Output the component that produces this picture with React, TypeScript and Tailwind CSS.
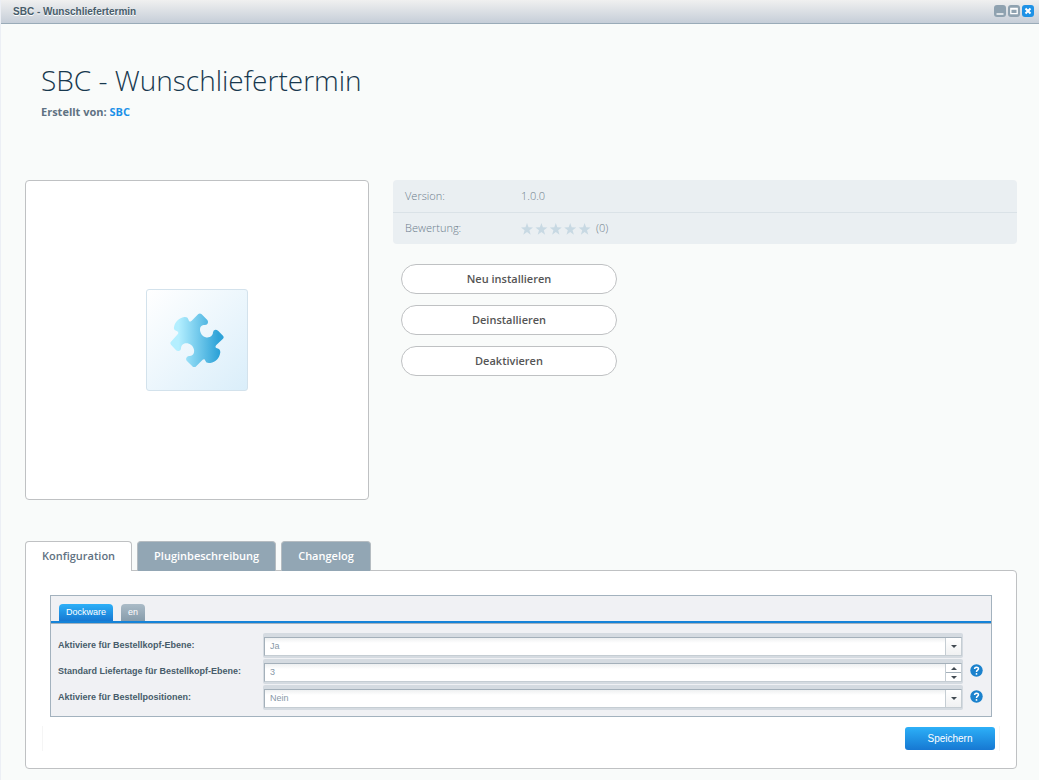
import type { ReactNode } from "react";

const actions = ["Neu installieren", "Deinstallieren", "Deaktivieren"];
const tabs = ["Pluginbeschreibung", "Changelog"];

function PuzzleIcon() {
	return (
		<svg className="h-[54px] w-[54px]" viewBox="0 0 162 162" aria-hidden="true">
			<defs>
				<linearGradient id="puzzle" x1="0" x2="1">
					<stop offset="0.15" stopColor="#b4efff" />
					<stop offset="0.9" stopColor="#2fa3d8" />
				</linearGradient>
			</defs>
			<path
				fill="url(#puzzle)"
				d="M3 86 L23 64 Q28 57 20 54 Q10 52 12 43 C14 27 27 15 43 12 Q54 11 56 22 Q58 29 65 23 L85 3 Q90 -1 95 4 L112 21 Q116 27 112 33 Q109 37 101 36 C91 37 88 47 91 56 C95 70 108 76 119 72 Q129 68 129 58 Q130 51 136 50 Q141 50 145 54 L159 68 Q163 73 159 77 L139 96 Q133 103 141 106 Q151 108 151 118 C149 135 137 148 121 150 Q108 152 106 143 Q104 136 98 140 L77 161 Q72 165 67 160 L50 143 Q46 138 51 132 Q54 128 60 129 C69 129 74 120 72 110 C69 96 57 89 45 91 Q35 94 33 104 Q34 112 27 114 Q21 115 17 110 L3 95 Q-1 90 3 86 Z"
			/>
		</svg>
	);
}

function Stars() {
	return (
		<svg className="h-3 w-[70px]" viewBox="0 0 70 12" fill="#c8d9e3" aria-hidden="true">
			{[0, 14.4, 28.8, 43.2, 57.6].map((x) => (
				<path key={x} transform={`translate(${x} 0)`} d="M6 0 L7.5 4.3 L12 4.4 L8.4 7.2 L9.7 11.7 L6 9.1 L2.3 11.7 L3.6 7.2 L0 4.4 L4.5 4.3Z" />
			))}
		</svg>
	);
}

function WindowButton({ label, className, children }: { label: string; className: string; children: ReactNode }) {
	return (
		<button type="button" aria-label={label} className={`h-3 w-3 rounded-[3px] ${className}`}>
			<svg className="block h-3 w-3" viewBox="0 0 12 12" fill="none" stroke="#fff" aria-hidden="true">
				{children}
			</svg>
		</button>
	);
}

function Help() {
	return (
		<button type="button" aria-label="Hilfe" className="ml-[7px] h-[13px] w-[13px]">
			<svg className="block h-[13px] w-[13px]" viewBox="0 0 13 13" aria-hidden="true">
				<circle cx="6.5" cy="6.5" r="6.2" fill="#1b82cd" />
				<path d="M4.6 5 C4.6 2.6 8.5 2.6 8.5 4.8 C8.5 6.2 6.5 6.1 6.5 7.9" fill="none" stroke="#fff" strokeWidth="1.5" />
				<circle cx="6.5" cy="9.9" r="0.9" fill="#fff" />
			</svg>
		</button>
	);
}

function Arrow({ up = false }: { up?: boolean }) {
	return (
		<svg className="h-[3px] w-[6px]" viewBox="0 0 6 3" fill="#414a52" aria-hidden="true">
			<path d={up ? "M0 3 L3 0 L6 3Z" : "M0 0 L6 0 L3 3Z"} />
		</svg>
	);
}

type RowProps = {
	id: string;
	label: string;
	help?: boolean;
	children: ReactNode;
};

function Row({ id, label, help, children }: RowProps) {
	return (
		<div className="flex h-[25px] items-center">
			<label htmlFor={id} className="w-[205px] shrink-0 text-[9px] font-bold text-[#475c6a]">
				{label}
			</label>
			<div className="flex h-[25px] flex-1 rounded-[2px] bg-[#d5dbe1] pt-1 pr-px pb-[2px] pl-px">{children}</div>
			<div className="w-[21px] shrink-0">{help && <Help />}</div>
		</div>
	);
}

function SelectField({ id, value }: { id: string; value: string }) {
	return (
		<div className="relative flex flex-1 border border-[#a4b0ba] border-r-[#c5cdd3] border-b-[#c5cdd3]">
			<select id={id} defaultValue={value} className="w-full appearance-none bg-white bg-linear-to-b from-[#eef0f1] to-white to-30% pl-[5px] text-[9px] text-[#8798a7]">
				<option>Ja</option>
				<option>Nein</option>
			</select>
			<span className="pointer-events-none absolute inset-y-0 right-0 flex w-4 items-center justify-center border-l border-[#c5cdd3] bg-linear-to-b from-white to-[#f0f1f2]">
				<Arrow />
			</span>
		</div>
	);
}

export default function App() {
	return (
		<div className="min-h-screen border-l border-[#eceff5] bg-[#f9fbfa] pb-[11px] font-['Liberation_Sans',Arial,sans-serif]">
			<header className="flex h-6 items-center justify-between border-b border-[#9aabb8] bg-linear-to-b from-[#f0f0f0] to-[#c6ced8] pr-[5px] pb-px pl-3">
				<span className="text-[10px] font-bold text-[#475c6a] [text-shadow:0_1px_0_#fff]">SBC - Wunschliefertermin</span>
				<div className="flex gap-[2px]">
					<WindowButton label="Minimieren" className="bg-[#8fa2b0]">
						<path d="M2.5 9 H9.5" strokeWidth="1.4" />
					</WindowButton>
					<WindowButton label="Maximieren" className="bg-[#8fa2b0]">
						<path d="M2.8 3.5 H9.2 V8.7 H2.8 Z M2.8 4 H9.2" strokeWidth="1.3" />
					</WindowButton>
					<WindowButton label="Schließen" className="bg-[#1e92e6]">
						<path d="M3.5 3.5 L8.5 8.5 M8.5 3.5 L3.5 8.5" strokeWidth="2" />
					</WindowButton>
				</div>
			</header>

			<main className="pt-9 pr-[22px] pl-6">
				<div className="h-[120px] pl-4 font-['Open_Sans',sans-serif]">
					<h1 className="text-[28px] leading-10 font-light text-[#17384e]">SBC - Wunschliefertermin</h1>
					<p className="mt-1 text-[11px] leading-4 font-bold text-[#5f7282]">
						Erstellt von:{" "}
						<a href="#sbc" className="text-[#1c91e8]">
							SBC
						</a>
					</p>
				</div>

				<section className="flex gap-6 font-['Open_Sans',sans-serif]">
					<figure className="flex h-80 w-[344px] shrink-0 items-center justify-center rounded-[4px] border border-[#bfc1c3] bg-white">
						<div className="flex h-[102px] w-[102px] items-center justify-center rounded-[3px] border border-[#d3e2ec] bg-linear-to-br from-white to-[#daeefa]">
							<PuzzleIcon />
						</div>
					</figure>
					<div className="flex-1">
						<dl className="rounded-[4px] bg-[#eaeff2] text-[11px] font-light text-[#6c7c8b]">
							<div className="flex h-8 items-center pl-3">
								<dt className="w-[116px]">Version:</dt>
								<dd>1.0.0</dd>
							</div>
							<div className="flex h-8 items-center border-t border-[#dae2e7] pl-3">
								<dt className="w-[116px]">Bewertung:</dt>
								<dd className="flex items-center gap-[5px]">
									<Stars />
									(0)
								</dd>
							</div>
						</dl>
						<div className="mt-5 flex flex-col items-start gap-[11px] pl-2">
							{actions.map((action) => (
								<button key={action} type="button" className="h-[30px] w-[216px] rounded-full border border-[#bfc1c3] bg-white text-[11px] font-semibold text-[#555]">
									{action}
								</button>
							))}
						</div>
					</div>
				</section>

				<nav className="mt-[41px] flex gap-[5px] font-['Open_Sans',sans-serif] text-[11px] font-semibold">
					<button type="button" className="relative z-10 -mb-px h-[30px] rounded-t-[4px] border border-b-0 border-[#bfc1c3] bg-white px-4 text-[#5f7282]">
						Konfiguration
					</button>
					{tabs.map((tab) => (
						<button key={tab} type="button" className="relative z-10 -mb-px h-[30px] rounded-t-[4px] border border-b-0 border-[#b5bcc1] bg-[#92a6b4] px-4 text-white">
							{tab}
						</button>
					))}
				</nav>
				<section className="rounded-[4px] rounded-tl-none border border-[#bfc1c3] bg-white px-4 pt-6 pb-[17px]">
					<form>
						<div className="mx-2 border border-[#a3b2be] bg-[#f0f1f4] pb-[6px]">
							<div className="flex items-end gap-2 border-b-2 border-[#1583d8] px-2 pt-2 text-[9px] text-white">
								<button type="button" className="h-[17px] rounded-t-[4px] bg-linear-to-b from-[#2db0f8] to-[#1778d2] px-[7px]">
									Dockware
								</button>
								<button type="button" className="h-[17px] rounded-t-[4px] bg-linear-to-b from-[#aabbc7] to-[#879cab] px-[7px]">
									en
								</button>
							</div>
							<div className="flex flex-col gap-px border-t border-[#a3b2be] px-[7px] pt-[9px]">
								<Row id="kopf" label="Aktiviere für Bestellkopf-Ebene:">
									<SelectField id="kopf" value="Ja" />
								</Row>
								<Row id="tage" label="Standard Liefertage für Bestellkopf-Ebene:" help>
									<div className="flex flex-1 border border-[#a4b0ba] border-r-[#c5cdd3] border-b-[#c5cdd3]">
										<input id="tage" defaultValue="3" className="min-w-0 flex-1 bg-white bg-linear-to-b from-[#eef0f1] to-white to-30% pl-[5px] text-[9px] text-[#8798a7]" />
										<div className="flex w-4 flex-col border-l border-[#c5cdd3] bg-white">
											<button type="button" aria-label="Erhöhen" className="flex flex-1 items-center justify-center border-b border-[#a4b0ba]">
												<Arrow up />
											</button>
											<button type="button" aria-label="Verringern" className="flex flex-1 items-center justify-center">
												<Arrow />
											</button>
										</div>
									</div>
								</Row>
								<Row id="pos" label="Aktiviere für Bestellpositionen:" help>
									<SelectField id="pos" value="Nein" />
								</Row>
							</div>
						</div>
						<div className="mt-[9px] flex justify-end border-x border-[#f5f5f5] pt-px pr-1 pb-px">
							<button type="submit" className="h-[23px] w-[90px] rounded-[3px] bg-linear-to-b from-[#2db0f8] to-[#1778d2] text-[10px] text-white">
								Speichern
							</button>
						</div>
					</form>
				</section>
			</main>
		</div>
	);
}
